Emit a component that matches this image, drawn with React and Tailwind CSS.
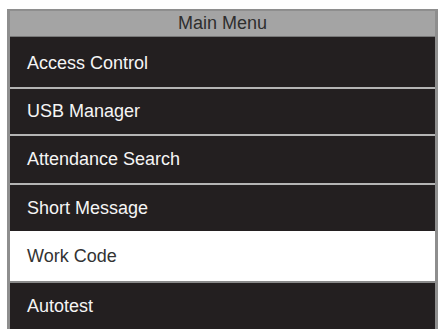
import React from "react";

const items = [
  { label: "Access Control", h: "h-[50px] pt-[3px]" },
  { label: "USB Manager", h: "h-[45px]" },
  { label: "Attendance Search", h: "h-[47px]" },
  { label: "Short Message", h: "h-[46px]" },
  { label: "Work Code", h: "h-[50px]", active: true },
  { label: "Autotest", h: "h-[46px]" },
];

export default function App() {
  return (
    <div
      className="w-[439px] h-[329px] overflow-hidden bg-white pt-[9px] pl-[7px]"
      style={{ fontFamily: '"Liberation Sans", Arial, sans-serif' }}
    >
      <div className="w-[431px] border-x-[3px] border-t-[2px] border-[#8e8e8e] bg-[#231f20]">
        {/* title bar */}
        <div className="h-[26px] bg-[#a4a4a4] flex items-center justify-center text-[18px] text-[#2e2e2e] border-b border-[#777]">
          Main Menu
        </div>
        {items.map((it, i) => (
          <div key={it.label}>
            {i > 0 && !it.active && !items[i - 1].active && (
              <div className="h-[2px] bg-[#b4b4b4]" />
            )}
            {items[i - 1] && items[i - 1].active && (
              <div className="h-[2px] bg-[#8a8a8a]" />
            )}
            <div
              className={
                "flex items-center pl-[17px] text-[18px] " +
                it.h +
                (it.active ? " bg-white text-[#333]" : " bg-[#231f20] text-[#f5f5f5]")
              }
            >
              {it.label}
            </div>
          </div>
        ))}
      </div>
    </div>
  );
}
